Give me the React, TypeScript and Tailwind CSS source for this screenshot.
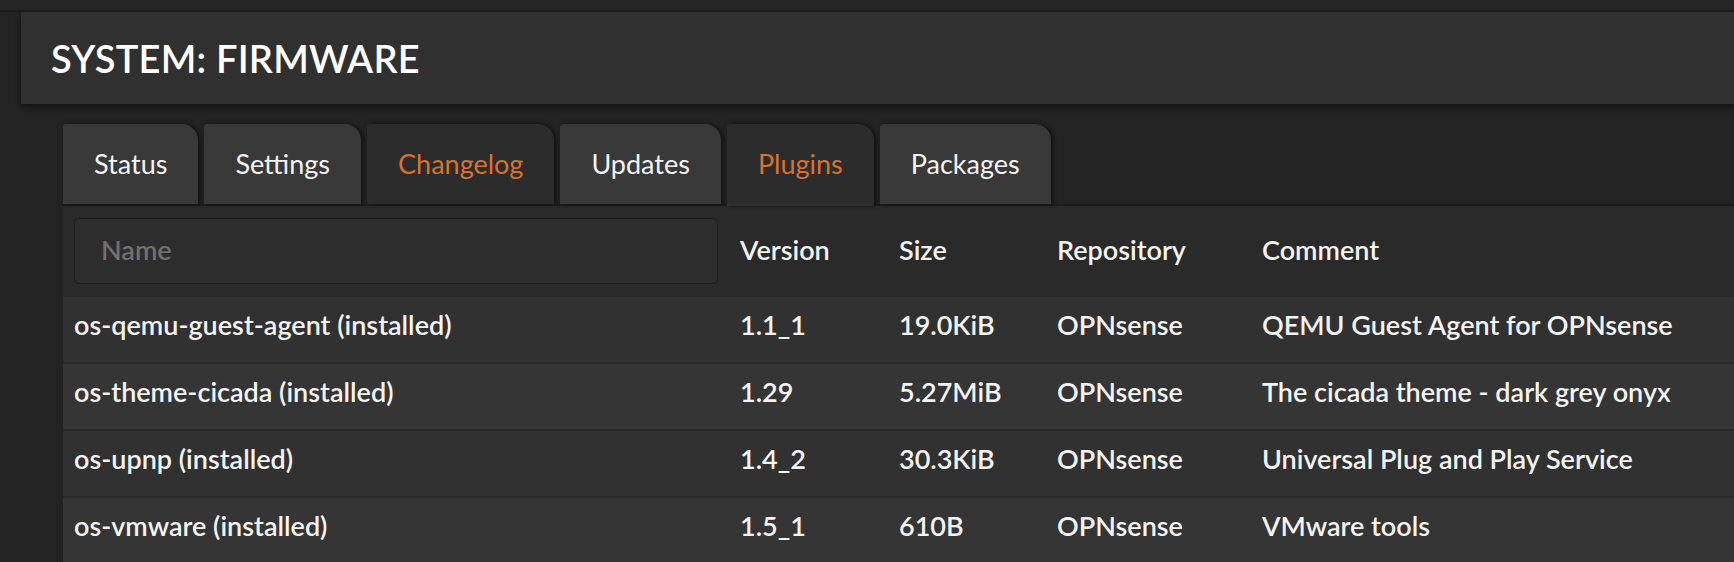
import React from 'react'

// Firmware > Plugins view, dark "cicada" look

type Tab = { label: string; active?: boolean; accent?: boolean }

const tabs: Tab[] = [
  { label: 'Status' },
  { label: 'Settings' },
  { label: 'Changelog', accent: true },
  { label: 'Updates' },
  { label: 'Plugins', active: true, accent: true },
  { label: 'Packages' },
]

const plugins = [
  { name: 'os-qemu-guest-agent (installed)', version: '1.1_1', size: '19.0KiB', repo: 'OPNsense', comment: 'QEMU Guest Agent for OPNsense' },
  { name: 'os-theme-cicada (installed)', version: '1.29', size: '5.27MiB', repo: 'OPNsense', comment: 'The cicada theme - dark grey onyx' },
  { name: 'os-upnp (installed)', version: '1.4_2', size: '30.3KiB', repo: 'OPNsense', comment: 'Universal Plug and Play Service' },
  { name: 'os-vmware (installed)', version: '1.5_1', size: '610B', repo: 'OPNsense', comment: 'VMware tools' },
]

const cols = 'grid grid-cols-[666px_159px_158px_205px_1fr]'

export default function App() {
  return (
    <div className="min-h-screen w-full overflow-hidden bg-[#232323] font-['Lato','Liberation_Sans',sans-serif] text-[#f4f4f4]">
      {/* top strip */}
      <div className="h-[10px] bg-[#262626]" />
      <div className="h-[2px] bg-[#1c1c1c]" />

      {/* page title */}
      <div className="ml-[21px] flex h-[92px] items-center bg-[#303030] pl-[30px] shadow-[0_3px_6px_rgba(0,0,0,0.45)]">
        <h1 className="text-[38px] font-semibold leading-none tracking-[0.2px] text-white">SYSTEM: FIRMWARE</h1>
      </div>

      <div className="ml-[63px] mt-[20px]">
        {/* tabs */}
        <div className="flex h-[82px] items-start gap-[6px] border-b-2 border-[#1c1c1c]">
          {tabs.map((t) => (
            <div
              key={t.label}
              className={`flex h-[80px] items-center rounded-tl-[3px] rounded-tr-[16px] px-[31px] text-[27px] shadow-[2px_0_4px_rgba(0,0,0,0.55)] ${
                t.accent ? 'bg-[#2c2c2c] text-[#d8732f]' : 'bg-[#393939] text-[#f4f4f4]'
              } ${t.active ? 'relative z-10 h-[82px] pb-[2px]' : ''}`}
            >
              {t.label}
            </div>
          ))}
        </div>

        {/* table */}
        <div className="bg-[#2a2a2a]">
          <div className={`${cols} h-[89px] items-center text-[27px] font-semibold`}>
            <div className="px-[11px]">
              <div className="flex h-[66px] items-center rounded-[5px] border border-[#1e1e1e] bg-[#2d2d2d] pl-[26px] text-[#707070]">
                Name
              </div>
            </div>
            <div className="px-[11px]">Version</div>
            <div className="px-[11px]">Size</div>
            <div className="px-[11px]">Repository</div>
            <div className="px-[11px]">Comment</div>
          </div>

          {plugins.map((p, i) => (
            <div
              key={p.name}
              className={`${cols} h-[67px] items-center border-t-2 border-[#2a2a2a] pb-[9px] text-[27px] font-semibold ${
                i % 2 === 0 ? 'bg-[#313131]' : 'bg-[#353535]'
              }`}
            >
              <div className="px-[11px]">{p.name}</div>
              <div className="px-[11px]">{p.version}</div>
              <div className="px-[11px]">{p.size}</div>
              <div className="px-[11px]">{p.repo}</div>
              <div className="px-[11px]">{p.comment}</div>
            </div>
          ))}
        </div>
      </div>
    </div>
  )
}
